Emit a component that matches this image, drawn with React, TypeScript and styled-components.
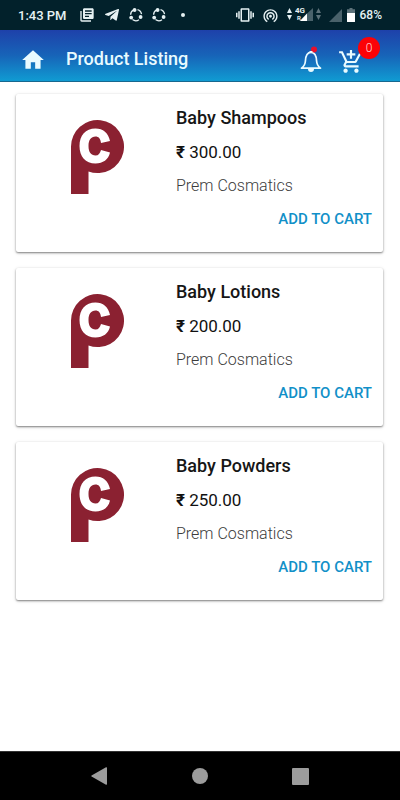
import React from "react";
import styled, { createGlobalStyle } from "styled-components";
import {
  MdAddShoppingCart,
  MdHome,
  MdLibraryBooks,
  MdVibration,
  MdWifiTethering,
} from "react-icons/md";
import { FaTelegramPlane } from "react-icons/fa";

const GlobalStyle = createGlobalStyle`
  * { box-sizing: border-box; }
  body {
    margin: 0;
    background: #fff;
    font-family: Roboto, "Noto Sans", sans-serif;
  }
  button { font-family: inherit; cursor: pointer; }
`;

const Screen = styled.div`
  min-height: 100vh;
  display: flex;
  flex-direction: column;
`;

const StatusBar = styled.div`
  height: 30px;
  padding: 0 18px;
  display: flex;
  align-items: center;
  justify-content: space-between;
  background: #02212b;
  color: #e6f1f3;
  font-size: 12px;
  font-weight: 500;
`;

const StatusGroup = styled.div<{ $gap: number }>`
  display: flex;
  align-items: center;
  gap: ${(p) => p.$gap}px;
  svg { display: block; flex: none; }
`;

const Clock = styled.time`
  font-size: 13px;
`;

const Dot = styled.span`
  width: 4px;
  height: 4px;
  margin-left: 6px;
  border-radius: 50%;
  background: #e6f1f3;
`;

const Header = styled.header`
  height: 52px;
  padding: 0 36px 0 20px;
  display: flex;
  align-items: center;
  color: #e9fbff;
  background: linear-gradient(#1e41aa, #1764b8 50%, #109bd2);
  border-bottom: 1px solid #17688f;
`;

const IconButton = styled.button`
  position: relative;
  width: 26px;
  height: 30px;
  padding: 0;
  display: flex;
  align-items: center;
  justify-content: center;
  border: 0;
  background: none;
  color: inherit;
  svg { display: block; flex: none; }
`;

const HomeButton = styled(IconButton)`
  margin-top: 8px;
`;

const CartButton = styled(IconButton)`
  padding-top: 4px;
`;

const PageTitle = styled.h1`
  flex: 1;
  margin: 0;
  padding: 6px 0 0 20px;
  font-size: 18px;
  line-height: 24px;
  font-weight: 500;
`;

const Actions = styled.div`
  display: flex;
  gap: 14px;
  padding: 8px 0 0;
`;

const CartBadge = styled.span`
  position: absolute;
  top: -8px;
  right: -16px;
  width: 22px;
  height: 22px;
  border-radius: 50%;
  background: #fb0207;
  color: #ffd9d9;
  font-size: 12px;
  line-height: 22px;
  font-weight: 300;
  text-align: center;
`;

const ProductList = styled.main`
  flex: 1;
  padding: 12px 17px 16px 16px;
  display: flex;
  flex-direction: column;
  gap: 16px;
`;

const Card = styled.article`
  min-height: 158px;
  display: grid;
  grid-template-columns: 160px 1fr;
  border-radius: 2px;
  background: #fff;
  box-shadow: 0 1px 2px rgba(0, 0, 0, 0.45), 0 1px 4px rgba(0, 0, 0, 0.12);
`;

const Picture = styled.div`
  padding: 26px 0 0 55px;
  svg { display: block; }
`;

const Details = styled.div`
  display: flex;
  flex-direction: column;
  padding: 12px 11px 20px 0;
`;

const Name = styled.h2`
  margin: 0;
  font-size: 18px;
  line-height: 24px;
  font-weight: 500;
  color: #161616;
`;

const Price = styled.p`
  margin: 10px 0 0;
  font-size: 17px;
  line-height: 24px;
  color: #111;
`;

const Rupee = styled.span`
  font-weight: 700;
`;

const Brand = styled.p`
  margin: 10px 0 0;
  font-size: 16px;
  line-height: 24px;
  font-weight: 300;
  color: #3c3c3c;
`;

const AddButton = styled.button`
  align-self: flex-end;
  margin-top: 9px;
  padding: 0;
  border: 0;
  background: none;
  color: #1190c8;
  font-size: 15px;
  line-height: 24px;
  font-weight: 500;
`;

const NavBar = styled.nav`
  height: 49px;
  padding: 0 49px;
  display: flex;
  align-items: center;
  justify-content: space-around;
  background: #000;
  border-top: 1px solid #333;
  color: #9c9c9c;
`;

const ShareRing = () => (
  <svg width="14" height="14" viewBox="0 0 14 14" fill="none" stroke="currentColor" strokeWidth="1.3">
    <path d="M4.600 1.900a5.500 5.500 0 0 0-3 4.800M8.500 1.600a5.500 5.500 0 0 1 4 4.500M3.500 11.600a5.500 5.500 0 0 0 6.500.2" />
    <g fill="currentColor" stroke="none">
      <circle cx="5.600" cy="2" r="1.900" />
      <circle cx="2.200" cy="9.600" r="1.900" />
      <circle cx="11.600" cy="9" r="1.900" />
    </g>
  </svg>
);

const Arrows = ({ color }: { color: string }) => (
  <svg width="5" height="14" viewBox="0 0 5 14" fill={color}>
    <path d="M2.500 0 5 5H0zM2.500 12 0 7h5z" />
  </svg>
);

const NetworkSignal = () => (
  <svg width="18" height="18" viewBox="0 0 18 18">
    <path d="M18 2v13H4z" fill="#49616a" />
    <path d="M12 7.600V15H5z" fill="#fff" />
    <text x="0" y="7" fontSize="8" fontWeight="700" fontFamily="Roboto, sans-serif" fill="#e6f1f3">4G</text>
    <text x="2" y="14" fontSize="6" fontWeight="700" fontFamily="Roboto, sans-serif" fill="#e6f1f3">R</text>
  </svg>
);

const EmptySignal = () => (
  <svg width="13" height="13" viewBox="0 0 13 13">
    <path d="M13 0v13H0z" fill="#49616a" />
  </svg>
);

const Battery = () => (
  <svg width="8" height="14" viewBox="0 0 8 14">
    <path d="M2.500 0h3v1.300H8V6H0V1.300h2.500z" fill="#5d727a" />
    <path d="M0 5h8v8.500a.5.5 0 0 1-.5.5h-7a.5.5 0 0 1-.5-.5z" fill="#fff" />
  </svg>
);

const Bell = () => (
  <svg width="22" height="28" viewBox="0 0 22 28">
    <path
      d="M1.500 22.200c2.700-2 3.700-3.700 3.900-7.200.2-5 1.600-8.700 5.600-8.700s5.400 3.700 5.600 8.700c.2 3.500 1.200 5.200 3.900 7.200z"
      fill="none"
      stroke="currentColor"
      strokeWidth="1.700"
      strokeLinejoin="round"
    />
    <circle cx="14" cy="3.500" r="3" fill="#e8102c" />
    <path d="M9.500 6.500V5h3v1.500zM8 23h6a3 3 0 0 1-6 0z" fill="currentColor" />
  </svg>
);

const BrandLogo = () => (
  <svg width="53" height="74" viewBox="0 0 53 74" role="img" aria-label="Prem Cosmatics">
    <path d="M0 74V26.500a26.500 26.500 0 1 1 17.500 25V74z" fill="#8b2131" />
    <path
      d="M39 21C37.500 13 32 8.500 24.500 8.500C14.500 8.500 8.500 15.500 8.500 26S14.500 43.500 24.500 43.500C32 43.500 37.500 39.500 39 32.500L30 30C29 33.500 27.500 35.500 24.500 35.500C20 35.500 17.500 32 17.500 26S20 16.500 24.500 16.500C27.500 16.500 29.500 18.500 30 23z"
      fill="#fff"
    />
  </svg>
);

const products = [
  { name: "Baby Shampoos", price: "300.00" },
  { name: "Baby Lotions", price: "200.00" },
  { name: "Baby Powders", price: "250.00" },
];

export default function App() {
  return (
    <Screen>
      <GlobalStyle />
      <StatusBar>
        <StatusGroup $gap={12}>
          <Clock>1:43 PM</Clock>
          <StatusGroup $gap={9}>
            <MdLibraryBooks size={16} />
            <FaTelegramPlane size={16} />
            <ShareRing />
            <ShareRing />
            <Dot />
          </StatusGroup>
        </StatusGroup>
        <StatusGroup $gap={8}>
          <MdVibration size={18} />
          <MdWifiTethering size={17} />
          <StatusGroup $gap={3}>
            <Arrows color="#e6f1f3" />
            <NetworkSignal />
            <Arrows color="#5d727a" />
          </StatusGroup>
          <StatusGroup $gap={5}>
            <EmptySignal />
            <Battery />
            <span>68%</span>
          </StatusGroup>
        </StatusGroup>
      </StatusBar>
      <Header>
        <HomeButton aria-label="Home">
          <MdHome size={26} />
        </HomeButton>
        <PageTitle>Product Listing</PageTitle>
        <Actions>
          <IconButton aria-label="Notifications">
            <Bell />
          </IconButton>
          <CartButton aria-label="Cart">
            <MdAddShoppingCart size={26} />
            <CartBadge>0</CartBadge>
          </CartButton>
        </Actions>
      </Header>
      <ProductList>
        {products.map((product) => (
          <Card key={product.name}>
            <Picture>
              <BrandLogo />
            </Picture>
            <Details>
              <Name>{product.name}</Name>
              <Price>
                <Rupee>₹</Rupee> {product.price}
              </Price>
              <Brand>Prem Cosmatics</Brand>
              <AddButton>ADD TO CART</AddButton>
            </Details>
          </Card>
        ))}
      </ProductList>
      <NavBar>
        <IconButton aria-label="Back">
          <svg width="16" height="18" viewBox="0 0 16 18" fill="currentColor">
            <path d="M15 .3Q16 0 16 1v16q0 1-1 .7L.6 9.600q-.8-.6 0-1.200z" />
          </svg>
        </IconButton>
        <IconButton aria-label="Home screen">
          <svg width="16" height="16" viewBox="0 0 16 16" fill="currentColor">
            <circle cx="8" cy="8" r="8" />
          </svg>
        </IconButton>
        <IconButton aria-label="Recent apps">
          <svg width="17" height="17" viewBox="0 0 17 17" fill="currentColor">
            <rect width="17" height="17" rx="1" />
          </svg>
        </IconButton>
      </NavBar>
    </Screen>
  );
}
